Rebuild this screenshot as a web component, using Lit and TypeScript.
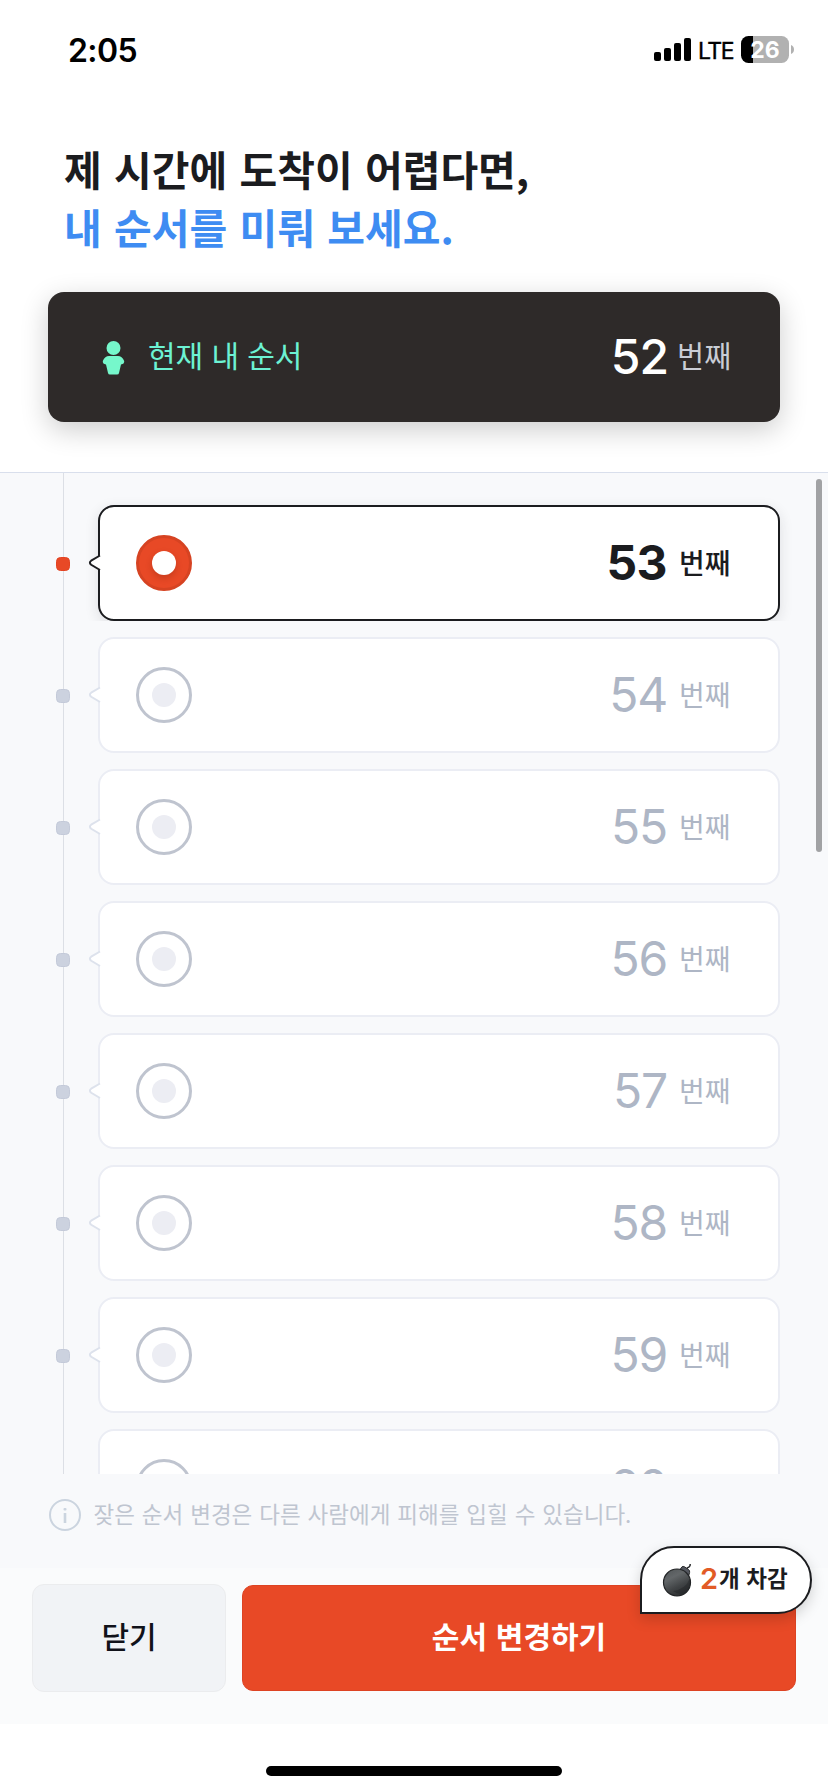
import { LitElement, html, svg, css } from "lit";
import { customElement, property, state } from "lit/decorators.js";
import { classMap } from "lit/directives/class-map.js";

@customElement("status-bar")
class StatusBar extends LitElement {
  static styles = css`
    :host { display: flex; justify-content: space-between; height: 100px; padding: 0 34px 0 68px; box-sizing: border-box; font-family: Inter, sans-serif; color: #000; }
    .time { font-size: 32px; font-weight: 600; line-height: 40px; margin-top: 31px; letter-spacing: -0.6px; }
    .right { display: flex; align-items: flex-start; }
    .bars { display: block; margin-top: 36px; }
    .lte { font-size: 23px; font-weight: 400; line-height: 30px; margin: 36px 0 0 6px; width: 40px; letter-spacing: -1.5px; -webkit-text-stroke: 0.4px #000; }
    .battery { margin-top: 36px; margin-left: 3px; width: 48px; height: 27px; border-radius: 7.5px; background: linear-gradient(90deg, #000 0 12px, #b1b1b1 12px); color: #fff; font-size: 23px; font-weight: 700; line-height: 28px; text-align: center; }
    .nub { display: block; margin: 45px 0 0 2px; }
  `;
  render() {
    return html`
      <span class="time">2:05</span>
      <div class="right">
        <svg class="bars" width="38" height="26" viewBox="0 0 38 26">
          <rect x="0" y="16" width="7" height="9" rx="2" /><rect x="10" y="12" width="7" height="13" rx="2" />
          <rect x="20" y="7" width="7" height="18" rx="2" /><rect x="30" y="2" width="7" height="23" rx="2" />
        </svg>
        <span class="lte">LTE</span>
        <span class="battery">26</span>
        <svg class="nub" width="3" height="9"><path d="M0 0C4 1.5 4 7.5 0 9Z" fill="#b1b1b1" /></svg>
      </div>`;
  }
}

@customElement("queue-row")
class QueueRow extends LitElement {
  @property({ type: Number }) number = 0;
  @property({ type: Boolean }) selected = false;
  static styles = css`
    :host { display: flex; align-items: center; height: 116px; flex: none; font-family: Inter, "Noto Sans CJK KR", sans-serif; }
    .dot { width: 14px; height: 14px; margin-left: 56px; margin-top: 2px; border-radius: 4.5px; box-sizing: border-box; background: #ccd2df; border: 1.5px solid #c4cad9; position: relative; }
    .dot.on { background: #e84926; border-color: #e34423; }
    .clip { margin-left: 8px; padding: 24px 20px 0; margin-top: -24px; overflow: hidden; margin-right: 28px; flex: 1; height: 116px; }
    .card { position: relative; height: 116px; box-sizing: border-box; border: 2px solid #ebedf4; border-radius: 16px; background: #fff; display: flex; align-items: center; padding: 0 47px 0 36px; color: #aeb6c5; }
    .card.on { border-color: #1b1c1f; color: #1b1c1f; box-shadow: 0 4px 14px rgba(30, 30, 40, 0.12); }
    .tip { position: absolute; left: -12px; top: 47px; }
    .ring { width: 56px; height: 56px; box-sizing: border-box; border: 3px solid #bfc4cf; border-radius: 50%; display: grid; place-items: center; }
    .ring.on { background: #e84926; border-color: #d64322; }
    .core { width: 24px; height: 24px; margin-top: -1px; border-radius: 50%; background: #ecedf3; }
    .on .core { background: #fff; box-shadow: 0 3px 6px rgba(120, 30, 10, 0.3); }
    .num { margin-left: auto; font-size: 48px; line-height: 60px; letter-spacing: -1.2px; }
    .on .num { font-weight: 700; letter-spacing: -0.6px; }
    .unit { font-family: "Noto Sans CJK KR", sans-serif; font-size: 28px; line-height: 40px; margin: -2px 0 0 12px; width: 52px; white-space: nowrap; }
    .on .unit { font-weight: 500; }
  `;
  render() {
    const on = { on: this.selected };
    const stroke = this.selected ? "#1b1c1f" : "#dde2ec";
    return html`
      <span class=${classMap({ dot: true, ...on })}></span>
      <div class="clip">
        <div class=${classMap({ card: true, ...on })}>
          <svg class="tip" width="14" height="18" viewBox="0 0 14 18">
            <path d="M14 1L12 1.5L3.2 6.7Q0.6 8.6 3.2 10.8L12 16L14 17Z" fill="#fff" />
            <path d="M12 1.5L3.2 6.7Q0.6 8.6 3.2 10.8L12 16" fill="none" stroke=${stroke} stroke-width="2" />
          </svg>
          <span class=${classMap({ ring: true, ...on })}><span class="core"></span></span>
          <span class="num">${this.number}</span>
          <span class="unit">번째</span>
        </div>
      </div>`;
  }
}

const bomb = svg`
  <defs><linearGradient id="b" x1="0.2" y1="0" x2="0.7" y2="1">
    <stop offset="0" stop-color="#54585a" /><stop offset="0.3" stop-color="#636769" /><stop offset="0.65" stop-color="#414446" /><stop offset="1" stop-color="#2a2c2e" />
  </linearGradient></defs>
  <path d="M24.8 6Q25.2 4.4 27 4Q28.4 3.4 28.2 1" fill="none" stroke="#232527" stroke-width="1.5" />
  <path d="M18 6.5L20 3.8Q21 3 22.5 3.8L26.6 6.6Q28 7.8 27.6 9.5L26.8 12.5Z" fill="#53565e" stroke="#2a2c2e" stroke-width="1" />
  <circle cx="15" cy="19.5" r="13.5" fill="url(#b)" stroke="#222426" stroke-width="1.2" />
  <path d="M27.5 16Q24 26 11 28Q21 35 27 25Q29 20 27.5 16Z" fill="#1f2123" opacity="0.4" />`;

@customElement("app-root")
class AppRoot extends LitElement {
  @state() private selected = 53;
  static styles = css`
    :host { display: flex; flex-direction: column; width: 828px; height: 1792px; overflow: hidden; background: #fff; font-family: "Noto Sans CJK KR", sans-serif; color: #1b1c1f; }
    status-bar { flex: none; }
    header { flex: none; height: 372px; display: flex; flex-direction: column; }
    h1 { margin: 39px 0 0 64px; font-size: 41px; line-height: 58px; font-weight: 700; word-spacing: 3px; white-space: nowrap; }
    .first, .second { display: block; }
    .second { color: #3e8cf2; }
    .current { margin: 37px 48px 0; height: 130px; border-radius: 16px; background: #2e2a29; display: flex; align-items: center; padding: 0 47px 0 54px; box-shadow: 0 8px 28px rgba(0, 0, 0, 0.2); }
    .person { margin-top: 2px; }
    .label { margin: -7px 0 0 23px; font-size: 30px; line-height: 44px; word-spacing: 1.5px; color: #6cf2d3; white-space: nowrap; }
    .now { margin-left: auto; font-family: Inter, sans-serif; font-size: 48px; line-height: 60px; font-weight: 500; color: #fff; letter-spacing: -1px; }
    .nth { font-size: 29.5px; line-height: 44px; margin: -7px 0 0 9px; width: 56px; color: #c9cdd6; white-space: nowrap; }
    .list { position: relative; flex: none; height: 1002px; box-sizing: border-box; border-top: 1px solid #d9dfec; background: #f8f9fb; overflow: hidden; display: flex; flex-direction: column; gap: 16px; padding-top: 32px; }
    .rail { position: absolute; left: 63px; top: 0; bottom: 0; width: 1px; background: #dcdfe5; }
    .thumb { position: absolute; left: 816px; top: 6px; width: 6px; height: 373px; border-radius: 3px; background: #a1a2a4; }
    .notice { flex: none; height: 94px; background: #f8f9fb; display: flex; padding-left: 48px; }
    .info { margin-top: 24px; }
    .msg { margin: 22px 0 0 11.5px; font-size: 22.5px; line-height: 34px; word-spacing: 1.9px; color: #bfc5d0; white-space: nowrap; }
    footer { flex: none; height: 156px; background: #fafbfc; display: flex; gap: 16px; padding: 16px 32px 0; box-sizing: border-box; align-items: flex-start; }
    .btn { margin: 0; padding: 0 0 6px; font: 500 30px/44px "Noto Sans CJK KR", sans-serif; box-sizing: border-box; display: grid; place-items: center; }
    .close { width: 194px; height: 108px; border: 1px solid #ebecee; border-radius: 12px; background: #f1f3f6; color: #11121a; }
    .submit { position: relative; width: 554px; height: 106px; margin-top: 1px; border: 1px solid #dd4323; border-radius: 11px; background: #e84926; color: #fff; font-weight: 700; word-spacing: 2px; }
    .badge { position: absolute; left: 397px; top: -40px; width: 172px; height: 68px; box-sizing: border-box; border: 2px solid #1b1c1f; border-radius: 34px 34px 34px 0; background: #fff; color: #1b1c1f; display: flex; align-items: center; padding-left: 20px; box-shadow: 0 5px 14px rgba(0, 0, 0, 0.17); }
    .count { font: 600 29px/40px Inter, sans-serif; color: #e25b26; margin: -2px 0 0 6px; width: 20px; }
    .deduct { font-size: 22.5px; line-height: 34px; font-weight: 700; margin-top: -6px; word-spacing: 1.5px; white-space: nowrap; }
    .home { flex: none; align-self: center; width: 296px; height: 10px; border-radius: 5px; background: #000; margin-top: 42px; }
  `;
  render() {
    return html`
      <status-bar></status-bar>
      <header>
        <h1><span class="first">제 시간에 도착이 어렵다면,</span><span class="second">내 순서를 미뤄 보세요.</span></h1>
        <section class="current">
          <svg class="person" width="23" height="34" viewBox="0 0 23 34" fill="#76f7cb">
            <circle cx="11.5" cy="7" r="7" />
            <path d="M7 15H16Q20 15 22.2 20Q22.5 23 19 23.5L17 32Q16.8 33.5 15 33.5H8Q6.3 33.5 6 32L4 23.5Q.5 23 .8 20Q3 15 7 15Z" />
          </svg>
          <span class="label">현재 내 순서</span>
          <span class="now">52</span>
          <span class="nth">번째</span>
        </section>
      </header>
      <main class="list">
        <span class="rail"></span>
        ${[53, 54, 55, 56, 57, 58, 59, 60].map(
          (n) => html`<queue-row .number=${n} .selected=${n === this.selected} @click=${() => (this.selected = n)}></queue-row>`
        )}
        <span class="thumb"></span>
      </main>
      <div class="notice">
        <svg class="info" width="34" height="34" viewBox="0 0 34 34" fill="#cbd4df">
          <circle cx="17" cy="17" r="15" fill="none" stroke="#cbd4df" stroke-width="2" />
          <rect x="15.5" y="10" width="3" height="2.6" rx="1" /><rect x="15.7" y="15" width="2.6" height="10" />
        </svg>
        <span class="msg">잦은 순서 변경은 다른 사람에게 피해를 입힐 수 있습니다.</span>
      </div>
      <footer>
        <button class="btn close">닫기</button>
        <button class="btn submit">
          <span>순서 변경하기</span>
          <span class="badge">
            <svg width="31" height="34" viewBox="0 0 31 34">${bomb}</svg>
            <span class="count">2</span><span class="deduct">개 차감</span>
          </span>
        </button>
      </footer>
      <div class="home"></div>`;
  }
}
